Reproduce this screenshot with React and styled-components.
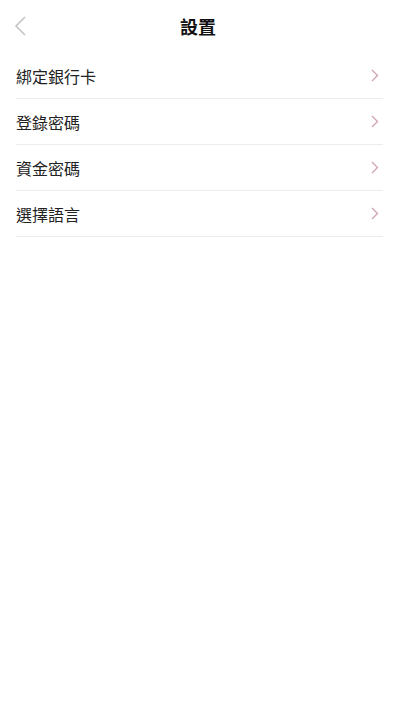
import React from "react";
import styled, { createGlobalStyle } from "styled-components";

const GlobalStyle = createGlobalStyle`
  html, body {
    margin: 0;
    padding: 0;
    background: #ffffff;
  }
  body {
    font-family: "Noto Sans CJK TC", "Noto Sans", sans-serif;
    color: #222222;
  }
`;

const Page = styled.div`
  width: 100%;
  min-height: 100vh;
  background: #ffffff;
`;

const Header = styled.header`
  position: relative;
  height: 53px;
  display: flex;
  align-items: center;
  justify-content: center;
`;

const BackButton = styled.button`
  position: absolute;
  left: 10px;
  top: 26px;
  transform: translateY(-50%);
  width: 20px;
  height: 24px;
  padding: 0;
  border: none;
  background: none;
  display: flex;
  align-items: center;
  justify-content: center;
`;

const Title = styled.h1`
  margin: 0 0 1px;
  font-size: 18px;
  font-weight: 700;
  color: #111111;
  line-height: 1;
`;

const List = styled.ul`
  list-style: none;
  margin: 0;
  padding: 0 13px 0 16px;
`;

const Row = styled.li`
  height: 45px;
  display: flex;
  align-items: center;
  justify-content: space-between;
  padding-right: 4px;
  border-bottom: 1px solid #ececec;
`;

const Label = styled.span`
  font-size: 16px;
  color: #222222;
  line-height: 1;
`;

const Chevron = () => (
  <svg width="8" height="13" viewBox="0 0 8 13" fill="none">
    <path d="M1 1l5.5 5.5L1 12" stroke="#cfa2b0" strokeWidth="1.3" />
  </svg>
);

const items = ["綁定銀行卡", "登錄密碼", "資金密碼", "選擇語言"];

export default function App() {
  return (
    <Page>
      <GlobalStyle />
      <Header>
        <BackButton aria-label="back">
          <svg width="12" height="20" viewBox="0 0 12 20" fill="none">
            <path d="M11 1L2 10l9 9" stroke="#c4c4c4" strokeWidth="1.6" />
          </svg>
        </BackButton>
        <Title>設置</Title>
      </Header>
      <List>
        {items.map((t) => (
          <Row key={t}>
            <Label>{t}</Label>
            <Chevron />
          </Row>
        ))}
      </List>
    </Page>
  );
}
